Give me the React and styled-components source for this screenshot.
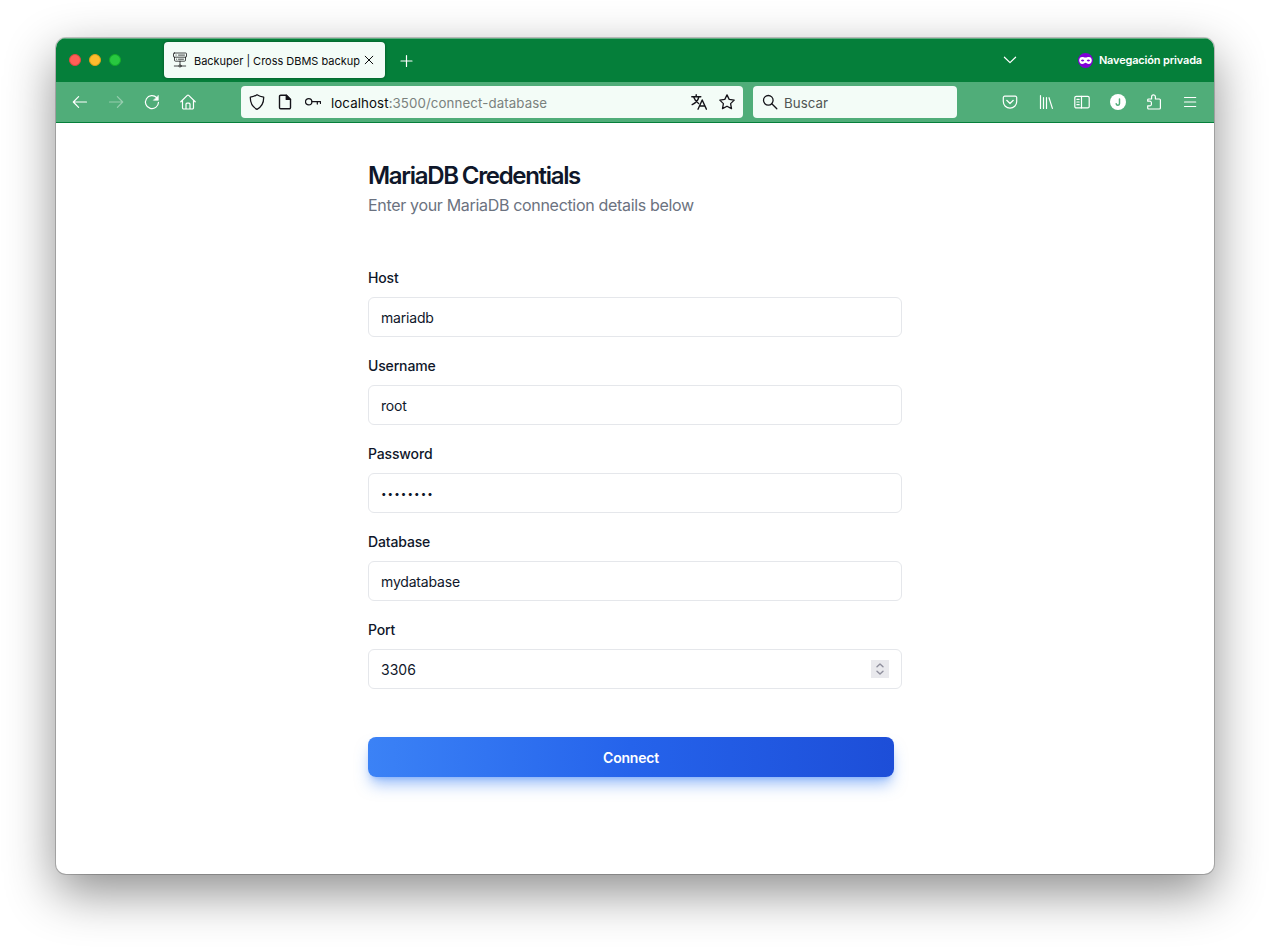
import React from 'react';
import styled, { createGlobalStyle } from 'styled-components';

const GlobalStyle = createGlobalStyle`
  *, *::before, *::after { box-sizing: border-box; }
  html, body { margin: 0; background: #fff; }
  body { font-family: Inter, 'Liberation Sans', sans-serif; -webkit-font-smoothing: antialiased; }
`;

const Desktop = styled.div`
  height: 948px;
  padding: 38px 56px 74px;
  overflow: hidden;
  background: #fff;
`;

const Window = styled.div`
  display: flex;
  flex-direction: column;
  width: 1158px;
  height: 836px;
  border-radius: 10px;
  overflow: hidden;
  background: #fff;
  box-shadow: 0 0 0 1px rgba(0, 0, 0, 0.2), 0 18px 50px rgba(0, 0, 0, 0.45);
`;

const TitleBar = styled.header`
  display: flex;
  align-items: center;
  flex: none;
  height: 44px;
  padding: 0 12px 0 13px;
  background: #057f3a;
  box-shadow: inset 0 1px 0 #5fae80;
  color: #fff;
`;

const Lights = styled.div`
  display: flex;
  gap: 8px;
  width: 95px;
`;

const Light = styled.span`
  width: 12px;
  height: 12px;
  border-radius: 50%;
  background: ${(p) => p.$color};
  border: 1px solid ${(p) => p.$edge};
`;

const Tab = styled.div`
  display: flex;
  align-items: center;
  width: 221px;
  height: 36px;
  padding: 0 10px 0 8px;
  border-radius: 4px;
  background: #f3fcf7;
  color: #0c0c0d;
  box-shadow: 0 0 3px rgba(0, 0, 0, 0.4);
`;

const TabTitle = styled.span`
  flex: 1;
  margin: 2px 0 0 6px;
  font-size: 11px;
  line-height: 16px;
  letter-spacing: -0.02px;
  white-space: nowrap;
`;

const NewTab = styled.span`
  display: flex;
  margin: 1px 0 0 14px;
`;

const TabList = styled.span`
  display: flex;
  margin-left: auto;
`;

const PrivateBadge = styled.div`
  display: flex;
  align-items: center;
  gap: 6px;
  margin-left: 60px;
  font-size: 11px;
  font-weight: 600;
  letter-spacing: -0.16px;
  white-space: nowrap;
`;

const Toolbar = styled.nav`
  display: flex;
  align-items: center;
  flex: none;
  height: 41px;
  padding: 0 6px;
  background: #50ad79;
  border-bottom: 1px solid #057f3a;
  color: #fff;
`;

const ButtonGroup = styled.div`
  display: flex;
  margin-left: ${(p) => (p.$end ? 'auto' : '0')};
`;

const ToolButton = styled.span`
  display: flex;
  align-items: center;
  justify-content: center;
  width: 36px;
  height: 32px;
  opacity: ${(p) => (p.$disabled ? 0.4 : 1)};
`;

const Field = styled.div`
  display: flex;
  align-items: center;
  height: 32px;
  border-radius: 4px;
  background: #f3fcf7;
  color: #15141a;
`;

const AddressField = styled(Field)`
  width: 502px;
  margin: 0 10px 0 35px;
  padding: 0 8px;
  gap: 12px;
`;

const Address = styled.span`
  flex: 1;
  margin: 2px 0 0 -2px;
  font-size: 13.3px;
  letter-spacing: 0.09px;
  color: #7a817d;
  white-space: nowrap;
`;

const Host = styled.span`
  color: #0c0c0d;
`;

const SearchField = styled(Field)`
  width: 204px;
  padding: 0 9px;
  gap: 6px;
`;

const SearchHint = styled.span`
  margin-top: 2px;
  font-size: 13.3px;
  letter-spacing: 0.05px;
  color: #505653;
`;

const Page = styled.main`
  flex: 1;
  padding: 37px 312px 0;
  color: #0f172a;
`;

const Heading = styled.h1`
  margin: 0;
  font-size: 24px;
  font-weight: 600;
  line-height: 32px;
  letter-spacing: -1.32px;
  word-spacing: -0.6px;
`;

const Lead = styled.p`
  margin: 1px 0 0;
  font-size: 16px;
  line-height: 24px;
  letter-spacing: -0.32px;
  color: #6b7280;
`;

const Form = styled.form`
  display: flex;
  flex-direction: column;
  margin-top: 54px;
`;

const FormRow = styled.div`
  display: flex;
  flex-direction: column;
  height: 88px;
`;

const Label = styled.label`
  height: 26px;
  font-size: 14px;
  font-weight: 500;
  line-height: 14px;
  letter-spacing: -0.15px;
`;

const Box = styled.div`
  display: flex;
  align-items: center;
  justify-content: space-between;
  height: 40px;
  padding: 1px 12px 0;
  border: 1px solid #e5e7eb;
  border-radius: 6px;
  font-size: 14px;
  line-height: 20px;
`;

const Value = styled.span`
  letter-spacing: ${(p) => (p.$masked ? '1.1px' : p.$numeric ? '0' : '-0.18px')};
  font-size: ${(p) => (p.$masked ? '9.8px' : '14px')};
`;

const Stepper = styled.span`
  display: flex;
  width: 18px;
  height: 18px;
  margin-top: -1px;
  background: #e9e9ed;
  color: #8f8f9d;
`;

const Submit = styled.button`
  width: 526px;
  height: 40px;
  margin-top: 26px;
  padding: 1px 0 0;
  border: 0;
  border-radius: 8px;
  background: linear-gradient(to right, #3b82f6, #2563eb 50%, #1d4ed8);
  box-shadow: 0 10px 15px -3px rgba(59, 130, 246, 0.5), 0 4px 6px -4px rgba(59, 130, 246, 0.5);
  color: #fff;
  font: 600 14px/20px Inter, 'Liberation Sans', sans-serif;
  letter-spacing: -0.2px;
`;

const Icon = ({ size = 16, w = 1.2, children }) => (
  <svg width={size} height={size} viewBox={`0 0 ${size} ${size}`} fill="none" stroke="currentColor" strokeWidth={w} strokeLinecap="round" strokeLinejoin="round">
    {children}
  </svg>
);

const ServerIcon = () => (
  <Icon w={0.75}>
    <rect x="1.500" y="1" width="13" height="4.200" rx=".8" />
    <path d="M2.500 5.200v3a1 1 0 0 0 1 1h9a1 1 0 0 0 1-1v-3M4 3.100h.2M6.500 3.100h6M4.500 7.200h.2M6.500 7.200h5M8 9.200v3.600M2.300 14h4.500M9.200 14h4.500" />
    <circle cx="8" cy="14" r="1.100" />
  </Icon>
);

const fields = [
  { label: 'Host', value: 'mariadb' },
  { label: 'Username', value: 'root' },
  { label: 'Password', value: '••••••••', masked: true },
  { label: 'Database', value: 'mydatabase' },
  { label: 'Port', value: '3306', stepper: true },
];

export default function App() {
  return (
    <>
      <GlobalStyle />
      <Desktop>
        <Window>
          <TitleBar>
            <Lights>
              <Light $color="#ff5f57" $edge="#e2463f" />
              <Light $color="#febc2e" $edge="#e1a116" />
              <Light $color="#28c840" $edge="#12ac28" />
            </Lights>
            <Tab>
              <ServerIcon />
              <TabTitle>Backuper | Cross DBMS backup</TabTitle>
              <Icon size={12} w={1}><path d="M2.200 2.200l7.600 7.600M9.800 2.200L2.200 9.800" /></Icon>
            </Tab>
            <NewTab><Icon><path d="M7.500 2.500v11M2 8h11" /></Icon></NewTab>
            <TabList><Icon><path d="M2.400 5.200L8 10.600l5.600-5.400" /></Icon></TabList>
            <PrivateBadge>
              <svg width="15" height="15" viewBox="0 0 15 15">
                <circle cx="7.500" cy="7.500" r="7.500" fill="#8000d7" />
                <path fillRule="evenodd" fill="#fff" d="M4.200 3.900c1.400 0 2 .6 3.300.6s1.900-.6 3.300-.6c1.800 0 3 1.200 3 3.300 0 2.300-1.300 3.800-3 3.800-1.600 0-2.200-1.300-3.300-1.300S5.800 11 4.200 11c-1.700 0-3-1.500-3-3.800 0-2.100 1.200-3.300 3-3.300zM2.900 7.500c.9 1.300 2.500 1.300 3.400.1-.9-1.300-2.500-1.300-3.400-.1zM8.700 7.600c.9 1.200 2.500 1.200 3.400-.1-.9-1.200-2.500-1.200-3.400.1z" />
              </svg>
              Navegación privada
            </PrivateBadge>
          </TitleBar>

          <Toolbar>
            <ButtonGroup>
              <ToolButton><Icon><path d="M14.500 8H1.500M6.600 2.700L1.300 8l5.300 5.300" /></Icon></ToolButton>
              <ToolButton $disabled><Icon><path d="M1.500 8h13M9.400 2.700L14.700 8l-5.300 5.300" /></Icon></ToolButton>
              <ToolButton>
                <Icon>
                  <path d="M12.700 3.600A6.500 6.500 0 1 0 14.500 8.300" />
                  <path d="M14.300 1.700v4.600H9.700z" fill="currentColor" strokeWidth="0.600" />
                </Icon>
              </ToolButton>
              <ToolButton>
                <Icon>
                  <path d="M.8 7.800l6.500-6.400a1 1 0 0 1 1.400 0l6.500 6.400M2.500 6.500v7.300A1.200 1.200 0 0 0 3.700 15h8.600a1.200 1.200 0 0 0 1.200-1.200V6.500M6 14.800v-4.600a1 1 0 0 1 1-1h2a1 1 0 0 1 1 1v4.600" />
                </Icon>
              </ToolButton>
            </ButtonGroup>

            <AddressField>
              <Icon w={1.300}><path d="M8 .7c2.300 1.500 4.400 2.100 6.700 2.500.1 5.300-1.700 9.700-6.700 12.100C3 12.900 1.200 8.500 1.300 3.200 3.600 2.800 5.700 2.200 8 .7z" /></Icon>
              <Icon w={1.400}>
                <path d="M9.300 1.200H3.700a1.200 1.200 0 0 0-1.200 1.200v11.200a1.200 1.200 0 0 0 1.200 1.200h8.600a1.200 1.200 0 0 0 1.200-1.200V5.400z" />
                <path d="M9.300 1.200v4.200h4.200z" fill="currentColor" />
              </Icon>
              <Icon w={1.250}><circle cx="3.700" cy="7.700" r="3.200" /><path d="M6.900 7.700h8.600v1.700M12.300 7.700v2.400" /></Icon>
              <Address><Host>localhost</Host>:3500/connect-database</Address>
              <Icon w={1.400}>
                <path d="M.8 2.800h9M5.200.8v2M7.800 3C7.200 6 4.800 8.800 1.200 10.600M2.800 3.200c.9 2.700 2.600 4.900 4.800 6.300M7 15.200L11.200 6l4.200 9.200M8.500 12h5.400" />
              </Icon>
              <Icon w={1.300}><path d="M8 .9l2.200 4.500 5 .7-3.600 3.500.9 5L8 12.200l-4.500 2.400.9-5L.8 6.100l5-.7z" /></Icon>
            </AddressField>
            <SearchField>
              <Icon w={1.300}><circle cx="6.300" cy="6.300" r="4.800" /><path d="M9.800 9.800l5 5" /></Icon>
              <SearchHint>Buscar</SearchHint>
            </SearchField>

            <ButtonGroup $end>
              <ToolButton><Icon><path d="M2.700 2.200h10.600A1.400 1.400 0 0 1 14.700 3.600V7.500a6.700 6.700 0 0 1-13.400 0V3.600A1.400 1.400 0 0 1 2.700 2.200zM4.700 6.300L8 9.500l3.300-3.200" /></Icon></ToolButton>
              <ToolButton><Icon><path d="M2.500 1.500v13M5.500 3.500v11M8.500 3.500v11M11 3.700l3.400 10.700" /></Icon></ToolButton>
              <ToolButton>
                <Icon><rect x=".8" y="2.300" width="14.400" height="11.600" rx="1.500" /><path d="M7.500 2.300v11.600M2.900 5.300h2.300M2.900 8h2.300M2.900 10.700h2.300" /></Icon>
              </ToolButton>
              <ToolButton>
                <Icon><circle cx="8" cy="8" r="8" fill="#fff" stroke="none" /><path d="M9.500 5v4.500c0 2.100-2.900 2.200-3.300.3" stroke="#50ad79" strokeWidth="1.500" /></Icon>
              </ToolButton>
              <ToolButton>
                <Icon>
                  <path d="M1.700 7.200V6a1 1 0 0 1 1-1h2.900V2.700a1.900 1.900 0 0 1 3.800 0V5h4a1 1 0 0 1 1 1v8a1 1 0 0 1-1 1H2.700a1 1 0 0 1-1-1v-2.200h2a1.600 1.600 0 0 0 1.700-1.600v-1.400a1.600 1.600 0 0 0-1.700-1.600z" />
                </Icon>
              </ToolButton>
              <ToolButton><Icon><path d="M2.500 3.500h11.200M2.500 8h11.200M2.500 12.500h11.200" /></Icon></ToolButton>
            </ButtonGroup>
          </Toolbar>

          <Page>
            <Heading>MariaDB Credentials</Heading>
            <Lead>Enter your MariaDB connection details below</Lead>
            <Form>
              {fields.map((f) => (
                <FormRow key={f.label}>
                  <Label>{f.label}</Label>
                  <Box>
                    <Value $masked={f.masked} $numeric={f.stepper}>{f.value}</Value>
                    {f.stepper && (
                      <Stepper>
                        <Icon size={18} w={1.400}><path d="M6 6.700l3-2.800 3 2.800M6 11.300l3 2.800 3-2.800" /></Icon>
                      </Stepper>
                    )}
                  </Box>
                </FormRow>
              ))}
              <Submit type="button">Connect</Submit>
            </Form>
          </Page>
        </Window>
      </Desktop>
    </>
  );
}
